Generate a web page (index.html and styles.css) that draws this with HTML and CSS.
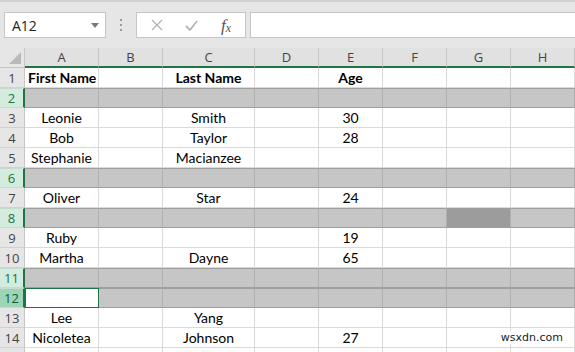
FILE: index.html
```html
<!DOCTYPE html>
<html lang="en">
<head>
  <meta charset="UTF-8">
  <title>Sheet1</title>
  <link rel="stylesheet" href="styles.css">
</head>
<body>

  <!-- Name box and formula bar -->
  <div class="toolbar">
    <div class="name-box">
      <span>A12</span>
      <svg class="caret" width="8" height="5" viewBox="0 0 8 5"><path d="M0 0h8L4 5z" fill="#7a7a7a"/></svg>
    </div>
    <svg class="grip" width="3" height="12" viewBox="0 0 3 12">
      <rect x="0" y="0" width="2" height="2" fill="#9a9a9a"/>
      <rect x="0" y="5" width="2" height="2" fill="#9a9a9a"/>
      <rect x="0" y="10" width="2" height="2" fill="#9a9a9a"/>
    </svg>
    <div class="fx-buttons">
      <svg width="12" height="12" viewBox="0 0 12 12"><path d="M1 1l10 10M11 1L1 11" stroke="#b4b4b4" stroke-width="1.4" fill="none"/></svg>
      <svg width="13" height="11" viewBox="0 0 13 11"><path d="M1 6l4 4l7-9" stroke="#b4b4b4" stroke-width="1.8" fill="none"/></svg>
      <span class="fx">f<sub>x</sub></span>
    </div>
    <div class="formula-input"></div>
  </div>

  <!-- Worksheet grid -->
  <div class="sheet">
    <div class="row col-head">
      <div class="corner"><svg width="12" height="12" viewBox="0 0 12 12"><path d="M12 0v12H0z" fill="#b9b9b9"/></svg></div>
      <div>A</div><div>B</div><div>C</div><div>D</div><div>E</div><div>F</div><div>G</div><div>H</div>
    </div>

    <div class="row"><div class="num">1</div><div class="bold left">First Name</div><div></div><div class="bold">Last Name</div><div></div><div class="bold">Age</div><div></div><div></div><div></div></div>
    <div class="row hid"><div class="num">2</div><div></div><div></div><div></div><div></div><div></div><div></div><div></div><div></div></div>
    <div class="row"><div class="num">3</div><div>Leonie</div><div></div><div>Smith</div><div></div><div>30</div><div></div><div></div><div></div></div>
    <div class="row"><div class="num">4</div><div>Bob</div><div></div><div>Taylor</div><div></div><div>28</div><div></div><div></div><div></div></div>
    <div class="row"><div class="num">5</div><div>Stephanie</div><div></div><div>Macianzee</div><div></div><div></div><div></div><div></div><div></div></div>
    <div class="row hid"><div class="num">6</div><div></div><div></div><div></div><div></div><div></div><div></div><div></div><div></div></div>
    <div class="row"><div class="num">7</div><div>Oliver</div><div></div><div>Star</div><div></div><div>24</div><div></div><div></div><div></div></div>
    <div class="row hid"><div class="num">8</div><div></div><div></div><div></div><div></div><div></div><div></div><div class="dark"></div><div></div></div>
    <div class="row"><div class="num">9</div><div>Ruby</div><div></div><div></div><div></div><div>19</div><div></div><div></div><div></div></div>
    <div class="row"><div class="num">10</div><div>Martha</div><div></div><div>Dayne</div><div></div><div>65</div><div></div><div></div><div></div></div>
    <div class="row hid"><div class="num">11</div><div></div><div></div><div></div><div></div><div></div><div></div><div></div><div></div></div>
    <div class="row hid active"><div class="num">12</div><div class="current"></div><div></div><div></div><div></div><div></div><div></div><div></div><div></div></div>
    <div class="row"><div class="num">13</div><div>Lee</div><div></div><div>Yang</div><div></div><div></div><div></div><div></div><div></div></div>
    <div class="row"><div class="num">14</div><div>Nicoletea</div><div></div><div>Johnson</div><div></div><div>27</div><div></div><div></div><div></div></div>
    <div class="row"><div class="num"></div><div></div><div></div><div></div><div></div><div></div><div></div><div></div><div></div></div>
  </div>

  <div class="watermark">wsxdn.com</div>

</body>
</html>
```

FILE: styles.css
```css
/* Reset */
* {
  margin: 0;
  padding: 0;
  box-sizing: border-box;
}

body {
  width: 575px;
  height: 352px;
  overflow: hidden;
  position: relative;
  background: #fff;
  font-family: Lato, "Open Sans", Arial, sans-serif;
  font-size: 14px;
  color: #000;
}

/* Toolbar */
.toolbar {
  height: 48px;
  display: flex;
  align-items: flex-start;
  padding-top: 12px;
  padding-left: 4px;
  background: #e6e6e6;
  border-top: 2px solid #d2d2d2;
}

.name-box {
  width: 102px;
  height: 26px;
  margin-top: -2px;
  display: flex;
  align-items: center;
  justify-content: space-between;
  padding: 0 6px 0 7px;
  background: #fff;
  border: 1px solid #c6c6c6;
  font-family: "Open Sans", Arial, sans-serif;
  font-size: 14px;
  color: #222;
}

.grip {
  margin: 5px 0 0 14px;
}

.fx-buttons {
  width: 110px;
  height: 26px;
  margin: -2px 0 0 13px;
  display: flex;
  align-items: center;
  justify-content: space-between;
  padding: 0 14px 0 14px;
  background: #fff;
  border: 1px solid #c6c6c6;
}

.fx {
  font-family: "Liberation Serif", serif;
  font-style: italic;
  font-size: 17px;
  color: #555;
  line-height: 1;
}

.fx sub {
  font-size: 12px;
  vertical-align: -1px;
}

.formula-input {
  flex: 1;
  height: 26px;
  margin: -2px 0 0 4px;
  background: #fff;
  border: 1px solid #c6c6c6;
  border-right: none;
}

/* Grid */
.row {
  display: grid;
  grid-template-columns: 25px 74px 64px 92px 64px 64px 64px 64px 1fr;
  height: 20px;
}

.row > div {
  border-right: 1px solid #dadada;
  border-bottom: 1px solid #dadada;
  text-align: center;
  line-height: 20px;
  white-space: nowrap;
  overflow: hidden;
}

.col-head {
  height: 20px;
  background: #e1e1e1;
}

.col-head > div {
  color: #444;
  font-family: "Open Sans", Arial, sans-serif;
  font-size: 13px;
  line-height: 18px;
  border-right: 1px solid #c6c6c6;
  border-bottom: 2px solid #217346;
}

.col-head > .corner {
  border-bottom: 1px solid #c6c6c6;
  background: #e6e6e6;
  display: flex;
  align-items: flex-end;
  justify-content: flex-end;
  padding: 0 3px 3px 0;
}

.row > .num {
  background: #e6e6e6;
  color: #444;
  font-family: "Open Sans", Arial, sans-serif;
  font-size: 13px;
  border-right: 1px solid #c6c6c6;
  border-bottom: 1px solid #d0d0d0;
}

.bold {
  font-weight: 700;
}

.row > .left {
  text-align: left;
  padding-left: 3px;
}

/* Hidden/selected gray rows */
.hid > div {
  background: #c6c6c6;
  border-right-color: #b0b0b0;
  border-top: 1px solid #9e9e9e;
  border-bottom: 1px solid #9e9e9e;
  line-height: 18px;
}

.hid > .num {
  background: #d3ecdd;
  color: #217346;
  border-top: 1px solid #c6dccf;
  border-bottom: 1px solid #c6dccf;
  border-right: 2px solid #217346;
}

.row.active > .num {
  background: #9fd5b7;
  color: #0e5c2f;
}

.hid > .dark {
  background: #9c9c9c;
}

.hid > .current {
  background: #fff;
  border: 1px solid #217346;
}

/* Watermark */
.watermark {
  position: absolute;
  right: 11px;
  bottom: 8px;
  padding: 0 1px;
  background: #fff;
  font-family: "DejaVu Sans", sans-serif;
  font-size: 11px;
  color: #222;
}
```
